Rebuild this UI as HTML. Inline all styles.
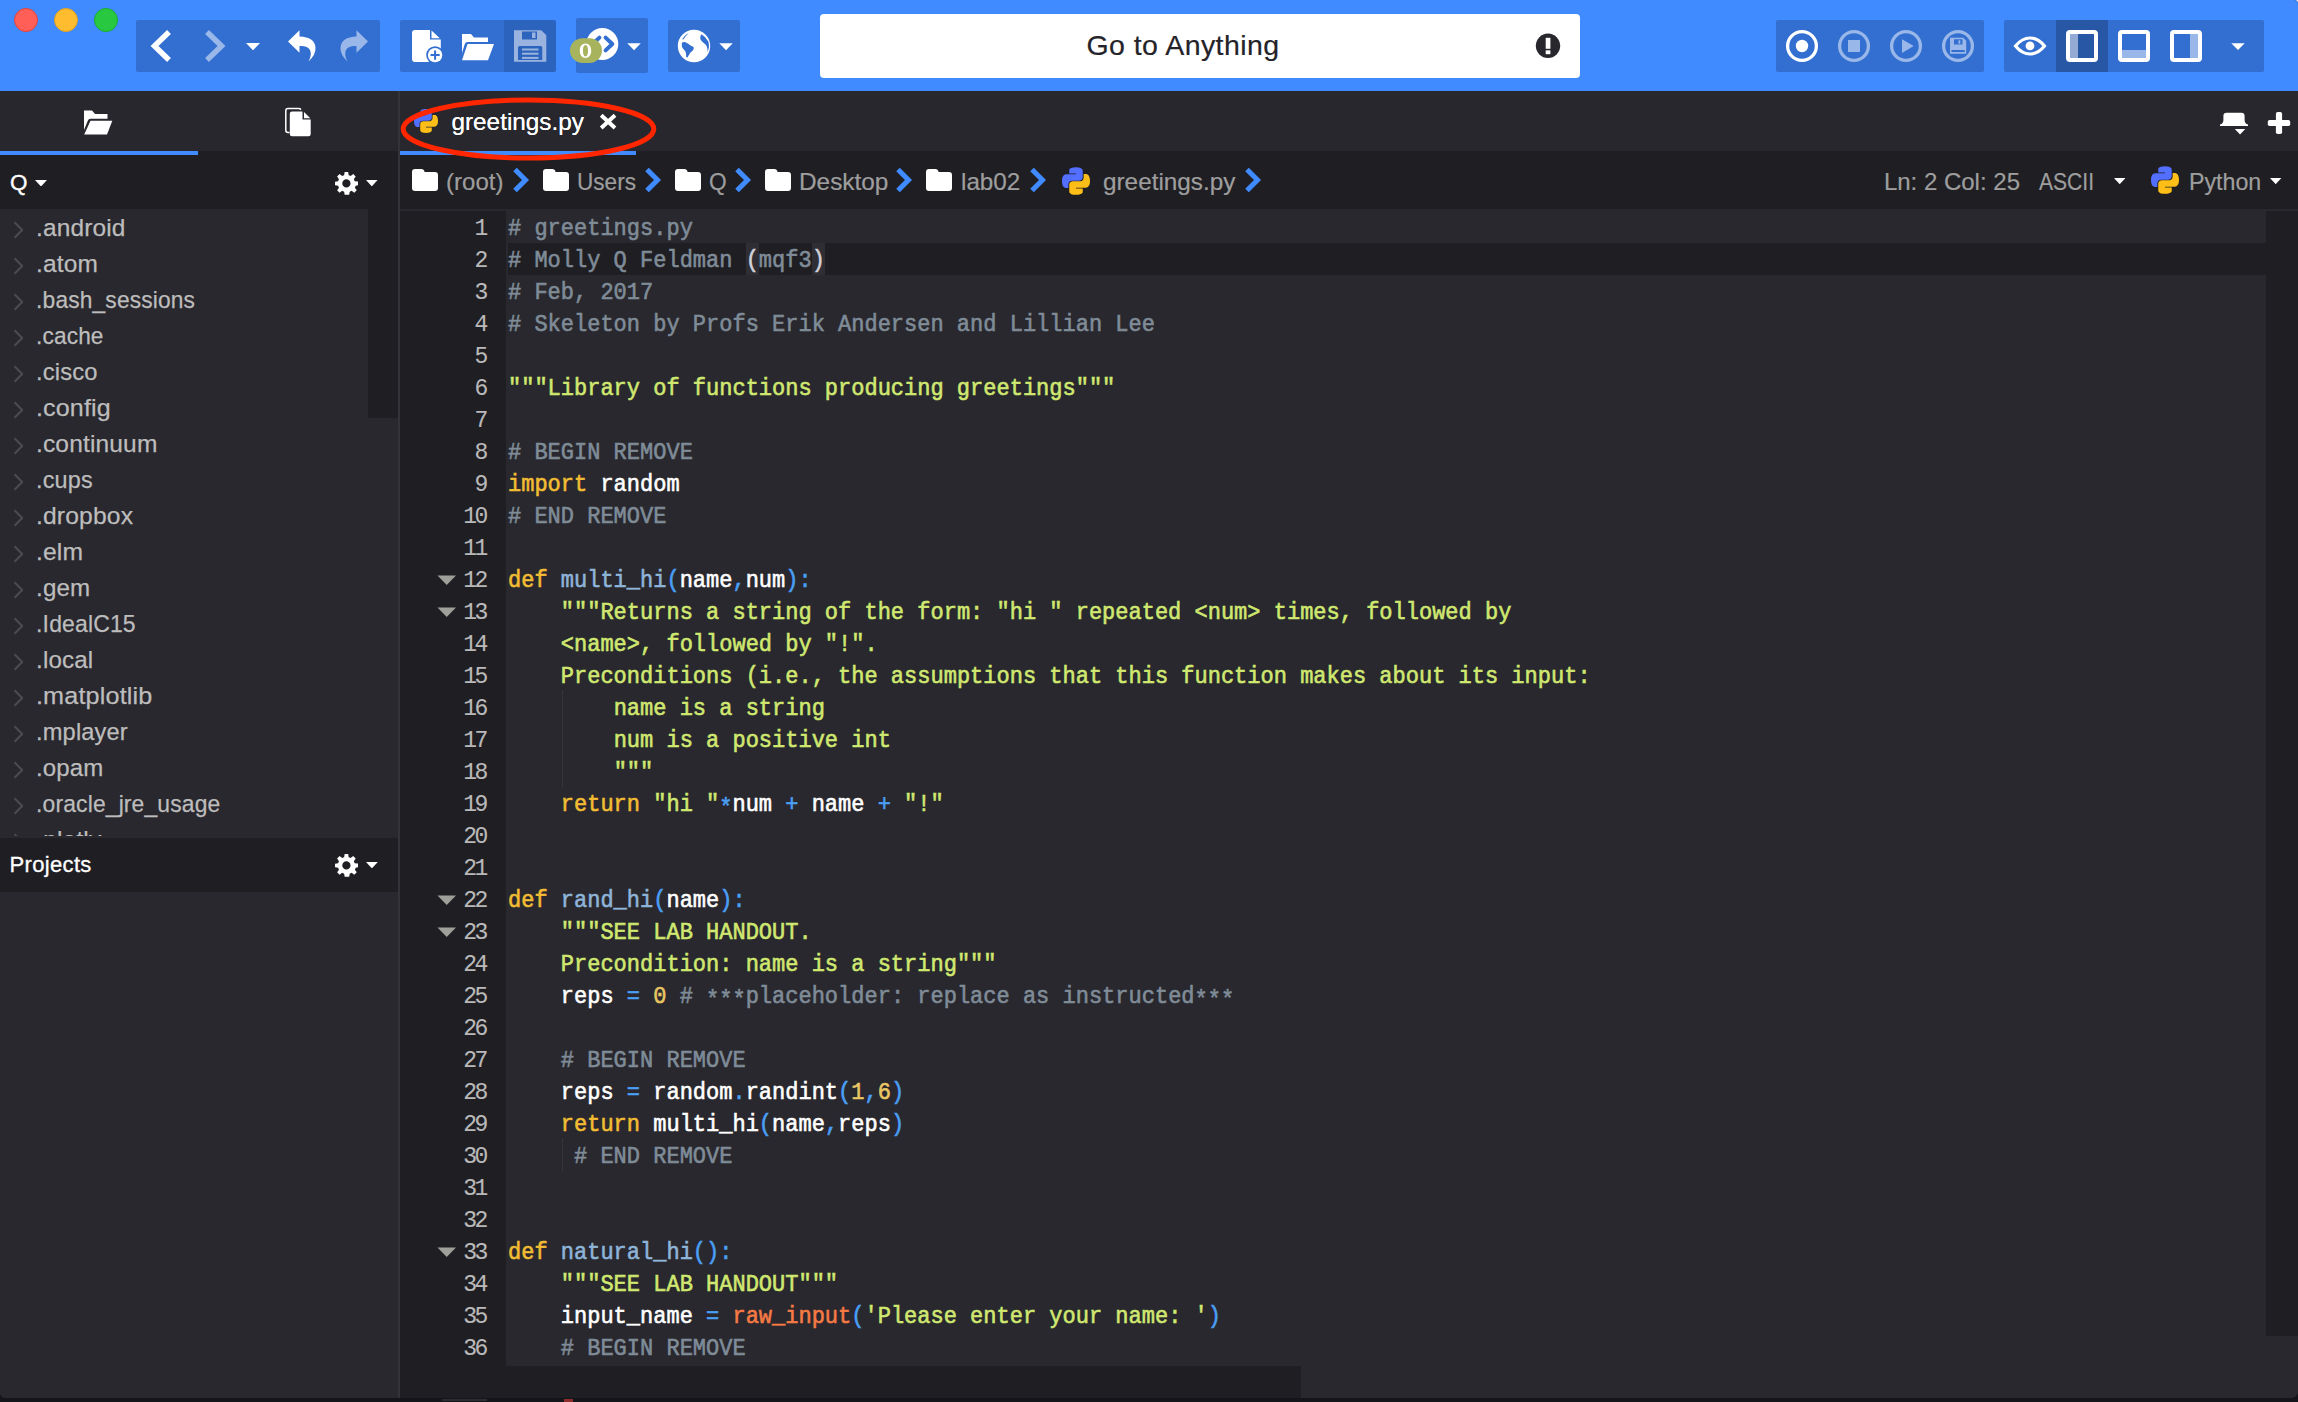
<!DOCTYPE html>
<html><head><meta charset="utf-8"><title>greetings.py</title>
<style>
*{margin:0;padding:0;box-sizing:border-box}
html,body{width:2298px;height:1402px;overflow:hidden;background:#14151A}
body{font-family:"Liberation Sans",sans-serif;position:relative}
.a{position:absolute;display:block}
.t{position:absolute;white-space:pre;line-height:1}
#win{position:absolute;left:0;top:0;width:2298px;height:1398px;overflow:hidden;border-radius:0 4px 7px 5px;background:#29282E}
.grp{position:absolute;background:#336FD1;border-radius:2px}
.ui{font-size:24px;color:#9E9E9E;-webkit-text-stroke:.2px}
.row{transform-origin:1.6px 0;-webkit-text-stroke:.25px;position:absolute;left:36.300px;font-size:24.500px;letter-spacing:.15px;color:#BDBDBD;white-space:pre;line-height:1}
.ln{position:absolute;left:400px;width:87.500px;text-align:right;font-family:"Liberation Mono",monospace;font-size:23px;letter-spacing:-2.400px;color:#B9B9B9;line-height:32px;height:32px;white-space:pre}
.cl{position:absolute;left:508px;font-family:"Liberation Mono",monospace;font-size:22px;color:#fff;line-height:32px;height:32px;white-space:pre}
.ct{display:inline-block;transform:translateY(3px) scaleY(1.12);transform-origin:0 22px;-webkit-text-stroke:.55px}
.lt{display:inline-block;transform:translate(-1.5px,2px);-webkit-text-stroke:.1px}
.as{position:relative;top:3.500px}
.c{color:#7F8C98}.k{color:#F2BD33}.s{color:#D0E870}.f{color:#8EB4D8}.o{color:#4A9FF5}.n{color:#E8C663}.b{color:#F67A45}
</style></head><body><div class="a" style="right:0;top:0;width:6px;height:6px;background:#EFEDE8"></div><div id="win">

<div class="a" style="left:0;top:0;width:2298px;height:91px;background:#3F8BFF"></div>
<div class="a" style="left:14px;top:8px;width:24px;height:24px;border-radius:50%;background:#FF5F57;border:1px solid #E1443E"></div>
<div class="a" style="left:54px;top:8px;width:24px;height:24px;border-radius:50%;background:#FEBC2E;border:1px solid #DFA023"></div>
<div class="a" style="left:94px;top:8px;width:24px;height:24px;border-radius:50%;background:#28C840;border:1px solid #1DAD2B"></div>
<div class="grp" style="left:136px;top:20px;width:244px;height:52px"></div>
<svg class="a" style="left:136px;top:20px" width="244" height="52" viewBox="136 20 244 52"><path fill="none" stroke="#fff" stroke-width="5.500" d="M169 32L154.500 46L169 60"/><path fill="none" stroke="#fff" stroke-opacity=".5" stroke-width="5.500" d="M207 32L221.500 46L207 60"/><path fill="#fff" d="M246 43h14l-7 7.300z"/><path fill="#fff" d="M299.500 30.300L288 41.500L299.500 52.800V46q8-.5 10.500 4 2.300 4.500-1.500 11.500 7.500-7 7-14-.8-10.500-16-11z"/><path fill="#fff" fill-opacity=".5" d="M356.500 30.300L368 41.500L356.500 52.800V46q-8-.5-10.500 4-2.300 4.500 1.500 11.500-7.500-7-7-14 .8-10.500 16-11z"/></svg>
<div class="grp" style="left:400px;top:20px;width:156px;height:52px"></div>
<div class="grp" style="left:504px;top:20px;width:52px;height:52px;background:#2C63BC;border-radius:0 3px 3px 0"></div>
<svg class="a" style="left:400px;top:20px" width="156" height="52" viewBox="400 20 156 52"><path fill="#fff" d="M415 30h15v9.500h10.800V59q0 3-3 3H415q-3 0-3-3V33q0-3 3-3zM431.500 30.500l8.300 7.700h-8.300z"/><circle cx="435.100" cy="55.100" r="8.900" fill="#336FD1"/><circle cx="435.100" cy="55.100" r="7.200" fill="#fff"/><path stroke="#336FD1" stroke-width="2" d="M430.500 55.100h9.200M435.100 50.500v9.200"/><path fill="#fff" d="M462 34h9l3 3.500h14v4.500h-20.500q-2 0-2.700 2L462 53z"/><path fill="#fff" d="M467.500 44h26.500l-6 16.300h-26z"/><g fill="#fff" fill-opacity=".52"><path fill-rule="evenodd" d="M514 30.200h27.300l5 5v26.500H514zM522 31.500v8h15v-8zM518 47.500q0-1.500 1.500-1.500h21.300q1.500 0 1.500 1.500V60H518z"/><rect x="532" y="32.500" width="3.500" height="5.500"/><rect x="522" y="48.500" width="16.500" height="2"/><rect x="522" y="52.700" width="16.500" height="2"/><rect x="522" y="56.900" width="16.500" height="2"/></g></svg>
<div class="grp" style="left:576px;top:18px;width:72px;height:55px"></div>
<svg class="a" style="left:566px;top:18px" width="82" height="55" viewBox="566 18 82 55"><circle cx="602.300" cy="44" r="16" fill="#fff"/><path fill="none" stroke="#336FD1" stroke-width="4" stroke-linecap="round" stroke-linejoin="round" d="M605.600 37.600L612.300 44L605.600 50.400M599.400 37.600L592.700 44L599.400 50.400"/><rect x="570" y="38.200" width="32" height="24.800" rx="12.400" fill="#A7B35D"/><path fill="#fff" fill-rule="evenodd" d="M585.500 43.500c3.600 0 5.700 3 5.700 7.200s-2.100 7.200-5.700 7.200-5.700-3-5.700-7.200 2.100-7.200 5.700-7.200zm0 1.500c-1.800 0-2.500 2.300-2.500 5.700s.7 5.700 2.500 5.700 2.500-2.300 2.500-5.700-.7-5.700-2.500-5.700z"/><path fill="#fff" d="M627.300 43.200h13.500l-6.750 7.100z"/></svg>
<div class="grp" style="left:668px;top:20px;width:72px;height:52px"></div>
<svg class="a" style="left:668px;top:20px" width="72" height="52" viewBox="668 20 72 52"><circle cx="694" cy="46" r="16.200" fill="#fff"/><path fill="#336FD1" d="M681.800 42.800Q683.500 41.800 685.500 42.200Q688.500 43.300 690.500 45.600L693.600 47Q694 49 692.800 50.500L690.300 52.800L687.400 57.500L686.200 57.300L686 53.500Q685.800 51.500 684.500 50.200L682.500 48Q681.600 46.500 681.800 42.800z"/><path fill="#336FD1" d="M701.400 34.300Q706 37 708.300 41.500Q710 47 707.500 52Q707.800 49 706.800 46.500Q706 44.300 704.300 43.400Q701.500 41.800 700.300 39Q699.600 36.300 701.400 34.300z"/><path fill="#336FD1" d="M682.200 38.900Q684.500 35 688.900 33Q685.500 36 683.300 39.500z"/><path fill="#fff" d="M719.300 43.200h13.500l-6.750 7.100z"/></svg>
<div class="a" style="left:820px;top:14px;width:760px;height:64px;background:#fff;border-radius:4px"></div>
<div class="t" id="gta" style="left:1086.500px;top:31px;font-size:28.500px;color:#242329;letter-spacing:.44px;-webkit-text-stroke:.2px">Go to Anything</div>
<svg class="a" style="left:1535px;top:33px" width="26" height="26" viewBox="1535 33 26 26"><circle cx="1548" cy="45.800" r="12.200" fill="#28272D"/><rect x="1545.700" y="37.800" width="4.700" height="11" fill="#fff"/><rect x="1545.700" y="50.300" width="4.700" height="3.900" fill="#fff"/></svg>
<div class="grp" style="left:1776px;top:20px;width:208px;height:52px"></div>
<svg class="a" style="left:1776px;top:20px" width="208" height="52" viewBox="1776 20 208 52"><circle cx="1802" cy="46" r="14.400" fill="none" stroke="#fff" stroke-width="3.300"/><circle cx="1802" cy="46" r="6.200" fill="#fff"/><g fill="#fff" fill-opacity=".5" stroke="#fff" stroke-opacity=".5"><circle cx="1854" cy="46" r="14.400" fill="none" stroke-width="3.300"/><rect x="1848" y="40" width="12" height="12" stroke="none"/><circle cx="1906" cy="46" r="14.400" fill="none" stroke-width="3.300"/><path stroke="none" d="M1902 39.200L1913.700 46L1902 53z"/><circle cx="1958" cy="46" r="14.400" fill="none" stroke-width="3.300"/><path stroke="none" fill-rule="evenodd" d="M1950 37.800h13.200l3 3v13H1950zM1954 39.300v5.200h8.500v-5.200zM1951.500 50v2h13.200v-2z"/><rect x="1958.500" y="40.300" width="1.800" height="3.400" stroke="none"/></g></svg>
<div class="grp" style="left:2004px;top:20px;width:260px;height:52px"></div>
<div class="grp" style="left:2056px;top:20px;width:52px;height:52px;background:#2757A5;border-radius:0"></div>
<svg class="a" style="left:2004px;top:20px" width="260" height="52" viewBox="2004 20 260 52"><path fill="none" stroke="#fff" stroke-width="3.200" d="M2015.500 46q6.500-8 14.500-8t14.500 8q-6.500 8-14.500 8t-14.500-8z"/><circle cx="2030" cy="45.900" r="4.400" fill="#fff"/><rect x="2068" y="32" width="28" height="28" rx="2" fill="none" stroke="#fff" stroke-width="4"/><rect x="2070" y="34" width="8" height="24" fill="#fff" fill-opacity=".5"/><rect x="2120" y="32" width="28" height="28" rx="2" fill="none" stroke="#fff" stroke-width="4"/><rect x="2122" y="50" width="24" height="8" fill="#fff" fill-opacity=".5"/><rect x="2172" y="32" width="28" height="28" rx="2" fill="none" stroke="#fff" stroke-width="4"/><rect x="2190" y="34" width="8" height="24" fill="#fff" fill-opacity=".5"/><path fill="#fff" d="M2231.300 43.200h13.400l-6.700 6.900z"/></svg>
<div class="a" style="left:0;top:91px;width:2298px;height:60px;background:#28272D"></div>
<div class="a" style="left:0;top:151px;width:2298px;height:58px;background:#1F1E23"></div>
<div class="a" style="left:0;top:151px;width:198px;height:4px;background:#3F8BFF"></div>
<div class="a" style="left:400px;top:151px;width:236px;height:4px;background:#3F8BFF"></div>
<svg class="a" style="left:83px;top:110px" width="30" height="25" viewBox="83 110 30 25"><path fill="#fff" d="M84 110.500h8l3 3.500h12.500v4.800H90.500q-2 0-2.700 2L84 130z"/><path fill="#fff" d="M90.500 120.800h21.800l-5.300 13.600H84.200z"/></svg>
<svg class="a" style="left:284px;top:107px" width="28" height="30" viewBox="284 107 28 30"><path fill="none" stroke="#fff" stroke-width="1.500" d="M289.500 132.500h-1.500q-2.200 0-2.200-2.200V110.800q0-2.200 2.200-2.200h10.500q1.500 0 2.500 1"/><path fill="#fff" d="M292 111.500h10.500v8h8.200V134q0 2.200-2.200 2.200H292q-2.200 0-2.200-2.200V113.700q0-2.200 2.200-2.200zM304 112l6.300 6.200H304z"/></svg>
<svg class="a" style="left:414px;top:109px" width="24" height="24" viewBox="0 0 110.6 109.6"><path fill="#526FFF" d="M54.9 0C26.8 0 28.6 12.2 28.6 12.2l.03 12.6h26.8v3.8H18S0 26.5 0 54.9c0 28.4 15.7 27.4 15.7 27.4h9.4V69.1s-.5-15.7 15.4-15.7h26.6s14.9.24 14.9-14.4V14.8S84.3 0 54.9 0z"/><path fill="#FDBF17" d="M55.7 109.6c28.1 0 26.3-12.2 26.3-12.2l-.03-12.6H55.2v-3.8h37.4s18 2 18-26.3c0-28.4-15.7-27.4-15.7-27.4h-9.4v13.2s.5 15.7-15.4 15.7H43.5s-14.9-.24-14.9 14.4v24.2s-2.3 14.8 27.1 14.8z"/></svg>
<div class="t" id="tabt" style="left:451.500px;top:110px;font-size:24.300px;color:#fff;text-shadow:0 0 .6px #fff">greetings.py</div>
<svg class="a" style="left:598px;top:112px" width="20" height="20" viewBox="598 112 20 20"><path stroke="#fff" stroke-width="4" d="M601.200 115.200L615 128M615 115.200L601.200 128"/></svg>
<svg class="a" style="left:396px;top:94px" width="266" height="70" viewBox="396 94 266 70"><ellipse cx="528.500" cy="129" rx="125.300" ry="29" fill="none" stroke="#FF2600" stroke-width="5"/></svg>
<svg class="a" style="left:2218px;top:110px" width="76" height="28" viewBox="2218 110 76 28"><path fill="#fff" d="M2220 126v-1.500q3.300-.8 3.400-4.500v-4q0-3.300 3.300-3.300h14.600q3.300 0 3.300 3.300v4q.1 3.700 3.400 4.500V126z"/><path fill="#fff" d="M2234.800 129h10.500l-5.250 5.400z"/><rect x="2267.800" y="119.900" width="22.400" height="6.200" rx="1.800" fill="#fff"/><rect x="2275.900" y="112" width="6.200" height="22.100" rx="1.800" fill="#fff"/></svg>
<svg class="a" style="left:412px;top:169px" width="26" height="22" viewBox="0 0 26 22"><path fill="#fff" d="M3 0h6.5q2 0 2.6 1.6l.5 1.4H23q3 0 3 3v13q0 3-3 3H3q-3 0-3-3V3q0-3 3-3z"/></svg>
<div class="t ui bc" style="left:446.1px;top:169.500px;transform:scaleX(1.0);transform-origin:0 0">(root)</div>
<svg class="a" style="left:511.5px;top:167px" width="18" height="26" viewBox="0 0 18 26"><path fill="none" stroke="#3F8BFF" stroke-width="5" d="M3 2.5L13.5 13L3 23.5"/></svg>
<svg class="a" style="left:543px;top:169px" width="26" height="22" viewBox="0 0 26 22"><path fill="#fff" d="M3 0h6.5q2 0 2.6 1.6l.5 1.4H23q3 0 3 3v13q0 3-3 3H3q-3 0-3-3V3q0-3 3-3z"/></svg>
<div class="t ui bc" style="left:576.7px;top:169.500px;transform:scaleX(0.941);transform-origin:0 0">Users</div>
<svg class="a" style="left:643.5px;top:167px" width="18" height="26" viewBox="0 0 18 26"><path fill="none" stroke="#3F8BFF" stroke-width="5" d="M3 2.5L13.5 13L3 23.5"/></svg>
<svg class="a" style="left:675px;top:169px" width="26" height="22" viewBox="0 0 26 22"><path fill="#fff" d="M3 0h6.5q2 0 2.6 1.6l.5 1.4H23q3 0 3 3v13q0 3-3 3H3q-3 0-3-3V3q0-3 3-3z"/></svg>
<div class="t ui bc" style="left:709.2px;top:169.500px;transform:scaleX(0.944);transform-origin:0 0">Q</div>
<svg class="a" style="left:734.0px;top:167px" width="18" height="26" viewBox="0 0 18 26"><path fill="none" stroke="#3F8BFF" stroke-width="5" d="M3 2.5L13.5 13L3 23.5"/></svg>
<svg class="a" style="left:765px;top:169px" width="26" height="22" viewBox="0 0 26 22"><path fill="#fff" d="M3 0h6.5q2 0 2.6 1.6l.5 1.4H23q3 0 3 3v13q0 3-3 3H3q-3 0-3-3V3q0-3 3-3z"/></svg>
<div class="t ui bc" style="left:798.6px;top:169.500px;transform:scaleX(1.015);transform-origin:0 0">Desktop</div>
<svg class="a" style="left:895.2px;top:167px" width="18" height="26" viewBox="0 0 18 26"><path fill="none" stroke="#3F8BFF" stroke-width="5" d="M3 2.5L13.5 13L3 23.5"/></svg>
<svg class="a" style="left:926px;top:169px" width="26" height="22" viewBox="0 0 26 22"><path fill="#fff" d="M3 0h6.5q2 0 2.6 1.6l.5 1.4H23q3 0 3 3v13q0 3-3 3H3q-3 0-3-3V3q0-3 3-3z"/></svg>
<div class="t ui bc" style="left:960.6px;top:169.500px;transform:scaleX(1.009);transform-origin:0 0">lab02</div>
<svg class="a" style="left:1028.5px;top:167px" width="18" height="26" viewBox="0 0 18 26"><path fill="none" stroke="#3F8BFF" stroke-width="5" d="M3 2.5L13.5 13L3 23.5"/></svg>
<svg class="a" style="left:1061.8px;top:167px" width="28" height="28" viewBox="0 0 110.6 109.6"><path fill="#526FFF" d="M54.9 0C26.8 0 28.6 12.2 28.6 12.2l.03 12.6h26.8v3.8H18S0 26.5 0 54.9c0 28.4 15.7 27.4 15.7 27.4h9.4V69.1s-.5-15.7 15.4-15.7h26.6s14.9.24 14.9-14.4V14.8S84.3 0 54.9 0z"/><path fill="#FDBF17" d="M55.7 109.6c28.1 0 26.3-12.2 26.3-12.2l-.03-12.6H55.2v-3.8h37.4s18 2 18-26.3c0-28.4-15.7-27.4-15.7-27.4h-9.4v13.2s.5 15.7-15.4 15.7H43.5s-14.9-.24-14.9 14.4v24.2s-2.3 14.8 27.1 14.8z"/></svg>
<div class="t ui bc" style="left:1103.3px;top:169.500px;transform:scaleX(1.013);transform-origin:0 0">greetings.py</div>
<svg class="a" style="left:1243.7px;top:167px" width="18" height="26" viewBox="0 0 18 26"><path fill="none" stroke="#3F8BFF" stroke-width="5" d="M3 2.5L13.5 13L3 23.5"/></svg>
<div class="t ui bc" style="left:1883.9px;top:169.500px;transform:scaleX(1.0);transform-origin:0 0">Ln: 2 Col: 25</div>
<div class="t ui bc" style="left:2039.1px;top:169.500px;transform:scaleX(0.877);transform-origin:0 0">ASCII</div>
<svg class="a" style="left:2114px;top:178px" width="11.4" height="6.2" viewBox="0 0 11.4 6.2"><path fill="#fff" d="M0 0H11.4L5.7 6.2z"/></svg>
<svg class="a" style="left:2151.1px;top:165.8px" width="28" height="28" viewBox="0 0 110.6 109.6"><path fill="#526FFF" d="M54.9 0C26.8 0 28.6 12.2 28.6 12.2l.03 12.6h26.8v3.8H18S0 26.5 0 54.9c0 28.4 15.7 27.4 15.7 27.4h9.4V69.1s-.5-15.7 15.4-15.7h26.6s14.9.24 14.9-14.4V14.8S84.3 0 54.9 0z"/><path fill="#FDBF17" d="M55.7 109.6c28.1 0 26.3-12.2 26.3-12.2l-.03-12.6H55.2v-3.8h37.4s18 2 18-26.3c0-28.4-15.7-27.4-15.7-27.4h-9.4v13.2s.5 15.7-15.4 15.7H43.5s-14.9-.24-14.9 14.4v24.2s-2.3 14.8 27.1 14.8z"/></svg>
<div class="t ui bc" style="left:2189px;top:169.500px;transform:scaleX(0.967);transform-origin:0 0">Python</div>
<svg class="a" style="left:2270.4px;top:178px" width="11.4" height="6.2" viewBox="0 0 11.4 6.2"><path fill="#fff" d="M0 0H11.4L5.7 6.2z"/></svg>
<div class="a" style="left:0;top:209px;width:398px;height:1189px;background:#29282E"></div>
<div class="a" style="left:368px;top:209px;width:30px;height:209px;background:#1F1E23"></div>
<div class="t" style="left:10px;top:172px;font-size:22.500px;color:#fff;-webkit-text-stroke:.35px">Q</div>
<svg class="a" style="left:35px;top:179.7px" width="12" height="6.5" viewBox="0 0 12 6.5"><path fill="#fff" d="M0 0H12L6.0 6.5z"/></svg>
<svg class="a" style="left:333.7px;top:170.8px" width="24.800" height="24.800" viewBox="0 0 24 24"><path fill="#fff" d="M12 8a4 4 0 100 8 4 4 0 000-8zm12 2.3v3.4l-3 .5q-.3 1-.8 1.9l1.8 2.5-2.4 2.4-2.5-1.8q-.9.5-1.9.8l-.5 3H10.300l-.5-3q-1-.3-1.900-.8l-2.500 1.800-2.400-2.400 1.800-2.500q-.5-.9-.8-1.900l-3-.5v-3.400l3-.5q.3-1 .8-1.900L3 5.400 5.400 3l2.500 1.800q.9-.5 1.900-.8l.5-3h3.400l.5 3q1 .3 1.900.8L18.600 3 21 5.400l-1.800 2.500q.5.9.8 1.900z" fill-rule="evenodd"/></svg>
<svg class="a" style="left:366.4px;top:179.7px" width="11.6" height="6.4" viewBox="0 0 11.6 6.4"><path fill="#fff" d="M0 0H11.6L5.8 6.4z"/></svg>
<div class="a" style="left:0;top:209px;width:368px;height:627px;overflow:hidden">
<svg class="a" style="left:12px;top:12px" width="14" height="18" viewBox="0 0 14 18"><path fill="none" stroke="#4C4B50" stroke-width="2" d="M2.500 1.300L10.200 9L2.500 16.700"/></svg>
<div class="row" style="top:6.5px;transform:scaleX(0.997)">.android</div>
<svg class="a" style="left:12px;top:48px" width="14" height="18" viewBox="0 0 14 18"><path fill="none" stroke="#4C4B50" stroke-width="2" d="M2.500 1.300L10.200 9L2.500 16.700"/></svg>
<div class="row" style="top:42.5px;transform:scaleX(0.998)">.atom</div>
<svg class="a" style="left:12px;top:84px" width="14" height="18" viewBox="0 0 14 18"><path fill="none" stroke="#4C4B50" stroke-width="2" d="M2.500 1.300L10.200 9L2.500 16.700"/></svg>
<div class="row" style="top:78.5px;transform:scaleX(0.93)">.bash_sessions</div>
<svg class="a" style="left:12px;top:120px" width="14" height="18" viewBox="0 0 14 18"><path fill="none" stroke="#4C4B50" stroke-width="2" d="M2.500 1.300L10.200 9L2.500 16.700"/></svg>
<div class="row" style="top:114.5px;transform:scaleX(0.923)">.cache</div>
<svg class="a" style="left:12px;top:156px" width="14" height="18" viewBox="0 0 14 18"><path fill="none" stroke="#4C4B50" stroke-width="2" d="M2.500 1.300L10.200 9L2.500 16.700"/></svg>
<div class="row" style="top:150.5px;transform:scaleX(0.969)">.cisco</div>
<svg class="a" style="left:12px;top:192px" width="14" height="18" viewBox="0 0 14 18"><path fill="none" stroke="#4C4B50" stroke-width="2" d="M2.500 1.300L10.200 9L2.500 16.700"/></svg>
<div class="row" style="top:186.5px;transform:scaleX(1.023)">.config</div>
<svg class="a" style="left:12px;top:228px" width="14" height="18" viewBox="0 0 14 18"><path fill="none" stroke="#4C4B50" stroke-width="2" d="M2.500 1.300L10.200 9L2.500 16.700"/></svg>
<div class="row" style="top:222.5px;transform:scaleX(1.001)">.continuum</div>
<svg class="a" style="left:12px;top:264px" width="14" height="18" viewBox="0 0 14 18"><path fill="none" stroke="#4C4B50" stroke-width="2" d="M2.500 1.300L10.200 9L2.500 16.700"/></svg>
<div class="row" style="top:258.5px;transform:scaleX(0.956)">.cups</div>
<svg class="a" style="left:12px;top:300px" width="14" height="18" viewBox="0 0 14 18"><path fill="none" stroke="#4C4B50" stroke-width="2" d="M2.500 1.300L10.200 9L2.500 16.700"/></svg>
<div class="row" style="top:294.5px;transform:scaleX(1.006)">.dropbox</div>
<svg class="a" style="left:12px;top:336px" width="14" height="18" viewBox="0 0 14 18"><path fill="none" stroke="#4C4B50" stroke-width="2" d="M2.500 1.300L10.200 9L2.500 16.700"/></svg>
<div class="row" style="top:330.5px;transform:scaleX(1.007)">.elm</div>
<svg class="a" style="left:12px;top:372px" width="14" height="18" viewBox="0 0 14 18"><path fill="none" stroke="#4C4B50" stroke-width="2" d="M2.500 1.300L10.200 9L2.500 16.700"/></svg>
<div class="row" style="top:366.5px;transform:scaleX(0.985)">.gem</div>
<svg class="a" style="left:12px;top:408px" width="14" height="18" viewBox="0 0 14 18"><path fill="none" stroke="#4C4B50" stroke-width="2" d="M2.500 1.300L10.200 9L2.500 16.700"/></svg>
<div class="row" style="top:402.5px;transform:scaleX(0.938)">.IdealC15</div>
<svg class="a" style="left:12px;top:444px" width="14" height="18" viewBox="0 0 14 18"><path fill="none" stroke="#4C4B50" stroke-width="2" d="M2.500 1.300L10.200 9L2.500 16.700"/></svg>
<div class="row" style="top:438.5px;transform:scaleX(0.985)">.local</div>
<svg class="a" style="left:12px;top:480px" width="14" height="18" viewBox="0 0 14 18"><path fill="none" stroke="#4C4B50" stroke-width="2" d="M2.500 1.300L10.200 9L2.500 16.700"/></svg>
<div class="row" style="top:474.5px;transform:scaleX(1.028)">.matplotlib</div>
<svg class="a" style="left:12px;top:516px" width="14" height="18" viewBox="0 0 14 18"><path fill="none" stroke="#4C4B50" stroke-width="2" d="M2.500 1.300L10.200 9L2.500 16.700"/></svg>
<div class="row" style="top:510.5px;transform:scaleX(0.965)">.mplayer</div>
<svg class="a" style="left:12px;top:552px" width="14" height="18" viewBox="0 0 14 18"><path fill="none" stroke="#4C4B50" stroke-width="2" d="M2.500 1.300L10.200 9L2.500 16.700"/></svg>
<div class="row" style="top:546.5px;transform:scaleX(0.98)">.opam</div>
<svg class="a" style="left:12px;top:588px" width="14" height="18" viewBox="0 0 14 18"><path fill="none" stroke="#4C4B50" stroke-width="2" d="M2.500 1.300L10.200 9L2.500 16.700"/></svg>
<div class="row" style="top:582.5px;transform:scaleX(0.934)">.oracle_jre_usage</div>
<svg class="a" style="left:12px;top:624px" width="14" height="18" viewBox="0 0 14 18"><path fill="none" stroke="#4C4B50" stroke-width="2" d="M2.500 1.300L10.200 9L2.500 16.700"/></svg>
<div class="row" style="top:618.5px;transform:scaleX(1.0)">.plotly</div>
</div>
<div class="a" style="left:0;top:838px;width:398px;height:54px;background:#1F1E23"></div>
<div class="t" style="left:9.500px;top:854.300px;font-size:22px;letter-spacing:.34px;color:#fff;-webkit-text-stroke:.3px">Projects</div>
<svg class="a" style="left:333.7px;top:852.8px" width="24.800" height="24.800" viewBox="0 0 24 24"><path fill="#fff" d="M12 8a4 4 0 100 8 4 4 0 000-8zm12 2.3v3.4l-3 .5q-.3 1-.8 1.9l1.8 2.5-2.4 2.4-2.5-1.8q-.9.5-1.9.8l-.5 3H10.300l-.5-3q-1-.3-1.900-.8l-2.500 1.800-2.400-2.400 1.800-2.500q-.5-.9-.8-1.900l-3-.5v-3.400l3-.5q.3-1 .8-1.900L3 5.400 5.400 3l2.500 1.800q.9-.5 1.900-.8l.5-3h3.400l.5 3q1 .3 1.900.8L18.600 3 21 5.400l-1.800 2.500q.5.9.8 1.900z" fill-rule="evenodd"/></svg>
<svg class="a" style="left:366.2px;top:861.6px" width="11.8" height="6.4" viewBox="0 0 11.8 6.4"><path fill="#fff" d="M0 0H11.8L5.9 6.4z"/></svg>
<div class="a" style="left:398px;top:91px;width:2px;height:1307px;background:#34333A"></div>
<div class="a" style="left:400px;top:209px;width:1898px;height:1189px;background:#29282E"></div>
<div class="a" style="left:400px;top:211px;width:106px;height:1187px;background:#1F1E23"></div>
<div class="a" style="left:508px;top:243px;width:1790px;height:32px;background:#1F1E23"></div>
<div class="a" style="left:2266px;top:211px;width:32px;height:1125px;background:#1F1E23"></div>
<div class="a" style="left:400px;top:1366px;width:901px;height:32px;background:#1F1E23"></div>
<div class="a" style="left:746px;top:243px;width:12.500px;height:32px;background:#2F2E34"></div>
<div class="a" style="left:812px;top:243px;width:12.500px;height:32px;background:#2F2E34"></div>
<div class="ln" style="top:211px"><span class="lt">1</span></div>
<div class="cl" style="top:211px"><span class="ct"><span class="c"># greetings.py</span></span></div>
<div class="ln" style="top:243px"><span class="lt">2</span></div>
<div class="cl" style="top:243px"><span class="ct"><span class="c"># Molly Q Feldman </span><span style="color:#D2D2DA">(</span><span class="c">mqf3</span><span style="color:#D2D2DA">)</span></span></div>
<div class="ln" style="top:275px"><span class="lt">3</span></div>
<div class="cl" style="top:275px"><span class="ct"><span class="c"># Feb, 2017</span></span></div>
<div class="ln" style="top:307px"><span class="lt">4</span></div>
<div class="cl" style="top:307px"><span class="ct"><span class="c"># Skeleton by Profs Erik Andersen and Lillian Lee</span></span></div>
<div class="ln" style="top:339px"><span class="lt">5</span></div>
<div class="ln" style="top:371px"><span class="lt">6</span></div>
<div class="cl" style="top:371px"><span class="ct"><span class="s">"""Library of functions producing greetings"""</span></span></div>
<div class="ln" style="top:403px"><span class="lt">7</span></div>
<div class="ln" style="top:435px"><span class="lt">8</span></div>
<div class="cl" style="top:435px"><span class="ct"><span class="c"># BEGIN REMOVE</span></span></div>
<div class="ln" style="top:467px"><span class="lt">9</span></div>
<div class="cl" style="top:467px"><span class="ct"><span class="k">import</span> random</span></div>
<div class="ln" style="top:499px"><span class="lt">10</span></div>
<div class="cl" style="top:499px"><span class="ct"><span class="c"># END REMOVE</span></span></div>
<div class="ln" style="top:531px"><span class="lt">11</span></div>
<div class="ln" style="top:563px"><span class="lt">12</span></div>
<svg class="a" style="left:437px;top:574.5px" width="20" height="11" viewBox="0 0 20 11"><path fill="#9F9F9A" d="M.5 .5H19L9.750 10z"/></svg>
<div class="cl" style="top:563px"><span class="ct"><span class="k">def</span> <span class="f">multi_hi</span><span class="o">(</span>name<span class="o">,</span>num<span class="o">):</span></span></div>
<div class="ln" style="top:595px"><span class="lt">13</span></div>
<svg class="a" style="left:437px;top:606.5px" width="20" height="11" viewBox="0 0 20 11"><path fill="#9F9F9A" d="M.5 .5H19L9.750 10z"/></svg>
<div class="cl" style="top:595px"><span class="ct">    <span class="s">"""Returns a string of the form: "hi " repeated &lt;num&gt; times, followed by</span></span></div>
<div class="ln" style="top:627px"><span class="lt">14</span></div>
<div class="cl" style="top:627px"><span class="ct">    <span class="s">&lt;name&gt;, followed by "!".</span></span></div>
<div class="ln" style="top:659px"><span class="lt">15</span></div>
<div class="cl" style="top:659px"><span class="ct">    <span class="s">Preconditions (i.e., the assumptions that this function makes about its input:</span></span></div>
<div class="ln" style="top:691px"><span class="lt">16</span></div>
<div class="cl" style="top:691px"><span class="ct">        <span class="s">name is a string</span></span></div>
<div class="ln" style="top:723px"><span class="lt">17</span></div>
<div class="cl" style="top:723px"><span class="ct">        <span class="s">num is a positive int</span></span></div>
<div class="ln" style="top:755px"><span class="lt">18</span></div>
<div class="cl" style="top:755px"><span class="ct">        <span class="s">"""</span></span></div>
<div class="ln" style="top:787px"><span class="lt">19</span></div>
<div class="cl" style="top:787px"><span class="ct">    <span class="k">return</span> <span class="s">"hi "</span><span class="o"><span class="as">*</span></span>num <span class="o">+</span> name <span class="o">+</span> <span class="s">"!"</span></span></div>
<div class="ln" style="top:819px"><span class="lt">20</span></div>
<div class="ln" style="top:851px"><span class="lt">21</span></div>
<div class="ln" style="top:883px"><span class="lt">22</span></div>
<svg class="a" style="left:437px;top:894.5px" width="20" height="11" viewBox="0 0 20 11"><path fill="#9F9F9A" d="M.5 .5H19L9.750 10z"/></svg>
<div class="cl" style="top:883px"><span class="ct"><span class="k">def</span> <span class="f">rand_hi</span><span class="o">(</span>name<span class="o">):</span></span></div>
<div class="ln" style="top:915px"><span class="lt">23</span></div>
<svg class="a" style="left:437px;top:926.5px" width="20" height="11" viewBox="0 0 20 11"><path fill="#9F9F9A" d="M.5 .5H19L9.750 10z"/></svg>
<div class="cl" style="top:915px"><span class="ct">    <span class="s">"""SEE LAB HANDOUT.</span></span></div>
<div class="ln" style="top:947px"><span class="lt">24</span></div>
<div class="cl" style="top:947px"><span class="ct">    <span class="s">Precondition: name is a string"""</span></span></div>
<div class="ln" style="top:979px"><span class="lt">25</span></div>
<div class="cl" style="top:979px"><span class="ct">    reps <span class="o">=</span> <span class="n">0</span> <span class="c"># <span class="as">*</span><span class="as">*</span><span class="as">*</span>placeholder: replace as instructed<span class="as">*</span><span class="as">*</span><span class="as">*</span></span></span></div>
<div class="ln" style="top:1011px"><span class="lt">26</span></div>
<div class="ln" style="top:1043px"><span class="lt">27</span></div>
<div class="cl" style="top:1043px"><span class="ct">    <span class="c"># BEGIN REMOVE</span></span></div>
<div class="ln" style="top:1075px"><span class="lt">28</span></div>
<div class="cl" style="top:1075px"><span class="ct">    reps <span class="o">=</span> random<span class="o">.</span>randint<span class="o">(</span><span class="n">1</span><span class="o">,</span><span class="n">6</span><span class="o">)</span></span></div>
<div class="ln" style="top:1107px"><span class="lt">29</span></div>
<div class="cl" style="top:1107px"><span class="ct">    <span class="k">return</span> multi_hi<span class="o">(</span>name<span class="o">,</span>reps<span class="o">)</span></span></div>
<div class="ln" style="top:1139px"><span class="lt">30</span></div>
<div class="cl" style="top:1139px"><span class="ct">     <span class="c"># END REMOVE</span></span></div>
<div class="ln" style="top:1171px"><span class="lt">31</span></div>
<div class="ln" style="top:1203px"><span class="lt">32</span></div>
<div class="ln" style="top:1235px"><span class="lt">33</span></div>
<svg class="a" style="left:437px;top:1246.5px" width="20" height="11" viewBox="0 0 20 11"><path fill="#9F9F9A" d="M.5 .5H19L9.750 10z"/></svg>
<div class="cl" style="top:1235px"><span class="ct"><span class="k">def</span> <span class="f">natural_hi</span><span class="o">():</span></span></div>
<div class="ln" style="top:1267px"><span class="lt">34</span></div>
<div class="cl" style="top:1267px"><span class="ct">    <span class="s">"""SEE LAB HANDOUT"""</span></span></div>
<div class="ln" style="top:1299px"><span class="lt">35</span></div>
<div class="cl" style="top:1299px"><span class="ct">    input_name <span class="o">=</span> <span class="b">raw_input</span><span class="o">(</span><span class="s">'Please enter your name: '</span><span class="o">)</span></span></div>
<div class="ln" style="top:1331px"><span class="lt">36</span></div>
<div class="cl" style="top:1331px"><span class="ct">    <span class="c"># BEGIN REMOVE</span></span></div>
<div class="a" style="left:562px;top:691px;width:0;height:96px;border-left:1.500px dotted #403F45"></div>
<div class="a" style="left:562px;top:1139px;width:0;height:32px;border-left:1.500px dotted #403F45"></div>
</div><div class="a" style="left:564px;top:1399px;width:9px;height:3px;background:#8E2B2B"></div><div class="a" style="left:442px;top:1399px;width:45px;height:2px;background:#2C2D33"></div></body></html>
